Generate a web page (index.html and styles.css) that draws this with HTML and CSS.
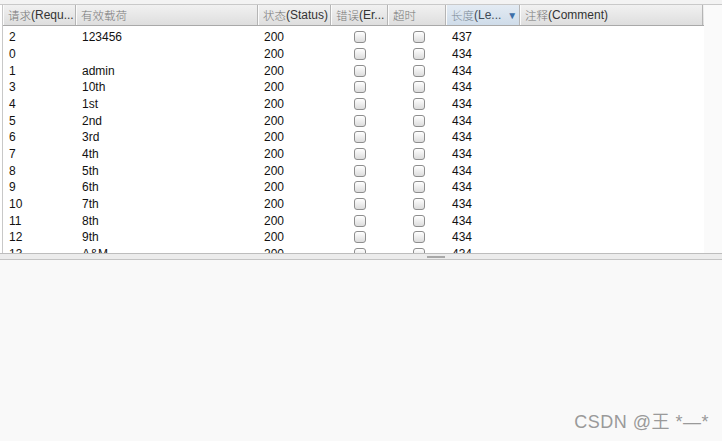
FILE: index.html
```html
<!DOCTYPE html>
<html lang="zh">
<head>
<meta charset="utf-8">
<title>Intruder results</title>
<link rel="stylesheet" href="styles.css">
</head>
<body>
<div class="page">
  <div class="top-strip"></div>
  <div class="panel">
    <div class="grid">
      <div class="head">
        <div class="hc c1"><span class="cjk">请求</span>(Requ...</div>
        <div class="hc c2"><span class="cjk">有效载荷</span></div>
        <div class="hc c3"><span class="cjk">状态</span>(Status)</div>
        <div class="hc c4"><span class="cjk">错误</span>(Er...</div>
        <div class="hc c5"><span class="cjk">超时</span></div>
        <div class="hc c6 sorted"><span class="cjk">长度</span>(Le...<span class="arrow">▼</span></div>
        <div class="hc c7"><span class="cjk">注释</span>(Comment)</div>
      </div>
      <div class="body">
        <div class="row"><div class="c c1">2</div><div class="c c2">123456</div><div class="c c3">200</div><div class="c c4"><i class="cb"></i></div><div class="c c5"><i class="cb"></i></div><div class="c c6">437</div><div class="c c7"></div></div>
        <div class="row"><div class="c c1">0</div><div class="c c2"></div><div class="c c3">200</div><div class="c c4"><i class="cb"></i></div><div class="c c5"><i class="cb"></i></div><div class="c c6">434</div><div class="c c7"></div></div>
        <div class="row"><div class="c c1">1</div><div class="c c2">admin</div><div class="c c3">200</div><div class="c c4"><i class="cb"></i></div><div class="c c5"><i class="cb"></i></div><div class="c c6">434</div><div class="c c7"></div></div>
        <div class="row"><div class="c c1">3</div><div class="c c2">10th</div><div class="c c3">200</div><div class="c c4"><i class="cb"></i></div><div class="c c5"><i class="cb"></i></div><div class="c c6">434</div><div class="c c7"></div></div>
        <div class="row"><div class="c c1">4</div><div class="c c2">1st</div><div class="c c3">200</div><div class="c c4"><i class="cb"></i></div><div class="c c5"><i class="cb"></i></div><div class="c c6">434</div><div class="c c7"></div></div>
        <div class="row"><div class="c c1">5</div><div class="c c2">2nd</div><div class="c c3">200</div><div class="c c4"><i class="cb"></i></div><div class="c c5"><i class="cb"></i></div><div class="c c6">434</div><div class="c c7"></div></div>
        <div class="row"><div class="c c1">6</div><div class="c c2">3rd</div><div class="c c3">200</div><div class="c c4"><i class="cb"></i></div><div class="c c5"><i class="cb"></i></div><div class="c c6">434</div><div class="c c7"></div></div>
        <div class="row"><div class="c c1">7</div><div class="c c2">4th</div><div class="c c3">200</div><div class="c c4"><i class="cb"></i></div><div class="c c5"><i class="cb"></i></div><div class="c c6">434</div><div class="c c7"></div></div>
        <div class="row"><div class="c c1">8</div><div class="c c2">5th</div><div class="c c3">200</div><div class="c c4"><i class="cb"></i></div><div class="c c5"><i class="cb"></i></div><div class="c c6">434</div><div class="c c7"></div></div>
        <div class="row"><div class="c c1">9</div><div class="c c2">6th</div><div class="c c3">200</div><div class="c c4"><i class="cb"></i></div><div class="c c5"><i class="cb"></i></div><div class="c c6">434</div><div class="c c7"></div></div>
        <div class="row"><div class="c c1">10</div><div class="c c2">7th</div><div class="c c3">200</div><div class="c c4"><i class="cb"></i></div><div class="c c5"><i class="cb"></i></div><div class="c c6">434</div><div class="c c7"></div></div>
        <div class="row"><div class="c c1">11</div><div class="c c2">8th</div><div class="c c3">200</div><div class="c c4"><i class="cb"></i></div><div class="c c5"><i class="cb"></i></div><div class="c c6">434</div><div class="c c7"></div></div>
        <div class="row"><div class="c c1">12</div><div class="c c2">9th</div><div class="c c3">200</div><div class="c c4"><i class="cb"></i></div><div class="c c5"><i class="cb"></i></div><div class="c c6">434</div><div class="c c7"></div></div>
        <div class="row"><div class="c c1">13</div><div class="c c2">A&amp;M</div><div class="c c3">200</div><div class="c c4"><i class="cb"></i></div><div class="c c5"><i class="cb"></i></div><div class="c c6">434</div><div class="c c7"></div></div>
      </div>
    </div>
    <div class="gutter"></div>
  </div>
  <div class="splitter"><span class="handle"></span></div>
  <div class="lower"></div>
  <div class="watermark">CSDN @王 *—*</div>
</div>
</body>
</html>
```

FILE: styles.css
```css
* { box-sizing: border-box; }
html, body { margin: 0; padding: 0; }
body {
  width: 722px;
  height: 441px;
  overflow: hidden;
  background: #f9f9f9;
  font-family: "Liberation Sans", Arial, "Noto Sans CJK SC", sans-serif;
  font-size: 12px;
  color: #111;
}
.page {
  position: relative;
  width: 722px;
  height: 441px;
  display: flex;
  flex-direction: column;
}
.top-strip {
  height: 5px;
  background: #f3f3f3;
  border-bottom: 1px solid #c9c9c9;
}
.panel {
  display: flex;
  height: 248px;
  background: #fff;
}
.grid {
  width: 702px;
  display: flex;
  flex-direction: column;
  border-left: 1px solid #c8c8c8;
  margin-left: 2px;
  overflow: hidden;
}
.gutter {
  flex: 1;
  background: #fafafa;
}
.head {
  display: flex;
  height: 21px;
  flex: none;
  background: linear-gradient(#f1f1f1, #dedede);
  border-bottom: 1px solid #a9a9a9;
}
.hc {
  display: flex;
  align-items: center;
  justify-content: flex-start;
  padding-left: 5px;
  border-right: 1px solid #b5b5b5;
  box-shadow: inset 1px 0 0 #fbfbfb;
  color: #333;
  white-space: nowrap;
  overflow: hidden;
}
.hc .cjk {
  font-family: "Noto Sans CJK SC", sans-serif;
  font-weight: 300;
  color: #777;
  font-size: 11.5px;
}
.hc.sorted {
  background: linear-gradient(#e3ebf3, #cfdce9);
  color: #3f4b58;
}
.hc.sorted .cjk { color: #7d8a97; }
.arrow {
  margin-left: 6px;
  font-size: 10px;
  color: #3c6fa8;
}
.c1 { width: 73px; }
.c2 { width: 182px; }
.c3 { width: 73px; }
.c4 { width: 57px; }
.c5 { width: 58px; }
.c6 { width: 74px; }
.c7 { width: 183px; }
.body {
  flex: 1;
  overflow: hidden;
  padding-top: 3px;
}
.row {
  display: flex;
  height: 16.67px;
  align-items: center;
}
.c {
  padding-left: 6px;
  white-space: nowrap;
  color: #111;
}
.row .c4, .row .c5 {
  display: flex;
  justify-content: center;
  padding-left: 0;
}
.row .c5 { padding-left: 3px; }
.cb {
  display: block;
  width: 12px;
  height: 12px;
  border: 1px solid #8e8e8e;
  border-radius: 3px;
  background: linear-gradient(#ffffff, #dcdcdc);
}
.splitter {
  position: relative;
  height: 7px;
  background: #ececec;
  border-top: 1px solid #bdbdbd;
  border-bottom: 1px solid #c4c4c4;
}
.handle {
  position: absolute;
  left: 427px;
  top: 2px;
  width: 18px;
  height: 2px;
  background: #a8a8a8;
}
.lower {
  flex: 1;
  background: #f9f9f9;
}
.watermark {
  position: absolute;
  right: 13px;
  bottom: 8px;
  font-family: "Liberation Sans", Arial, "Noto Sans CJK SC", sans-serif;
  font-size: 18px;
  letter-spacing: 0.5px;
  color: #9a9a9a;
}
```
